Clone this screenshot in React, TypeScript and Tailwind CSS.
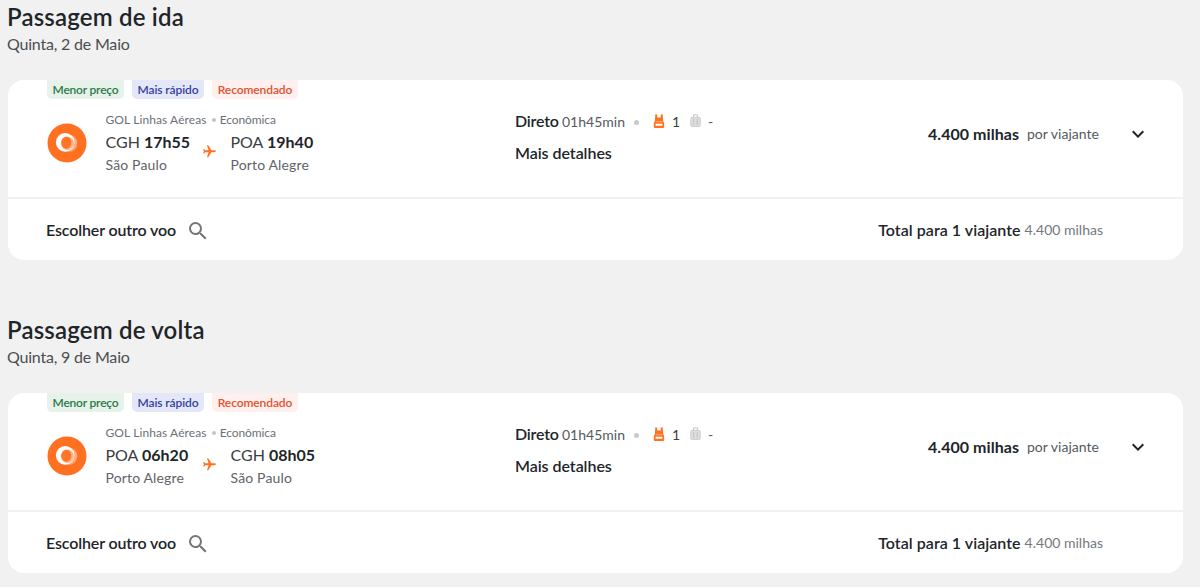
import { MdExpandMore, MdFlight, MdSearch } from "react-icons/md";

interface Stop {
  code: string;
  time: string;
  city: string;
}

interface FlightCardProps {
  title: string;
  date: string;
  from: Stop;
  to: Stop;
}

function GolLogo() {
  return (
    <svg width="40" height="40" viewBox="0 0 40 40" className="shrink-0">
      <circle cx="20" cy="20" r="19.5" fill="#ff7020" />
      <ellipse cx="21.8" cy="20.2" rx="8.4" ry="8.6" fill="#ffae80" />
      <circle cx="18.2" cy="19.4" r="9.3" fill="#fff" />
      <ellipse cx="20.4" cy="20.2" rx="6.6" ry="6.8" fill="#ffb68d" />
      <ellipse cx="19.4" cy="19.8" rx="5" ry="6" fill="#ff7426" />
    </svg>
  );
}

function BackpackIcon() {
  return (
    <svg width="12" height="15" viewBox="0 0 12 15">
      <path d="M3.2 5V.4M8.8 5V.4" stroke="#ff7020" strokeWidth="2" />
      <path d="M2.2 3.4h7.6l.4 3.8 1 1.8v3.8q0 1.2-1.2 1.2H2q-1.2 0-1.2-1.2V9l1-1.8z" fill="#ff7020" />
      <path d="M2.6 7.8h6.8" stroke="#ffc9a6" strokeWidth=".7" />
      <path d="M2.6 9.8h6.8v1.9H2.6z" fill="#fff" />
    </svg>
  );
}

function SuitcaseIcon() {
  return (
    <svg width="11" height="14" viewBox="0 0 11 14">
      <path d="M3.6 3.5V.9h3.8v2.6" fill="none" stroke="#c4c4c4" strokeWidth="1" />
      <rect x=".8" y="3.4" width="9.4" height="9" rx="1" fill="#dedede" stroke="#cbcbcb" />
      <path d="M3.8 5v6M7.2 5v6" stroke="#bdbdbd" strokeWidth=".9" />
    </svg>
  );
}

function StopInfo({ code, time, city }: Stop) {
  return (
    <div>
      <p className="h-[22px] text-[16px] leading-[22px] text-[#3c4043]">
        {code} <span className="font-bold text-[#212529]">{time}</span>
      </p>
      <p className="mt-[2px] h-5 text-[14px] leading-5 tracking-[0.15px] text-[#5f6368]">{city}</p>
    </div>
  );
}

function FlightCard({ title, date, from, to }: FlightCardProps) {
  return (
    <section className="h-[313px] pl-2 pr-[17px]">
      <h2 className="-ml-px h-[33px] text-[24px] font-semibold leading-[34px] tracking-[0.18px] text-[#212529]">{title}</h2>
      <p className="-ml-px h-5 text-[16px] leading-[22px] tracking-[-0.2px] text-[#4a4e52]">{date}</p>

      <article className="mt-[27px] h-[180px] overflow-hidden rounded-[16px] bg-white">
        <div className="flex h-[119px] border-b-2 border-[#f1f1f1] pl-[39px]">
          <div className="w-[468px]">
            <div className="flex gap-2 text-[12px] font-semibold leading-5 tracking-[-0.1px]">
              <span className="h-[19px] w-[77px] rounded-b-[5px] bg-[#e6f2ea] text-center tracking-[-0.2px] text-[#2b7a48]">
                Menor preço
              </span>
              <span className="h-[19px] w-[72px] rounded-b-[5px] bg-[#e4e7f8] text-center text-[#34409f]">Mais rápido</span>
              <span className="h-[19px] w-[86px] rounded-b-[5px] bg-[#fdf0ef] text-center text-[#e2512b]">Recomendado</span>
            </div>
            <div className="mt-3 flex">
              <div className="pt-3">
                <GolLogo />
              </div>
              <div className="ml-[18.5px]">
                <p className="flex h-[18px] items-center text-[12px] leading-[18px] text-[#6c7075]">
                  <span className="tracking-[0.1px]">GOL Linhas Aéreas</span>
                  <i className="ml-[5px] mr-1 size-1 rounded-full bg-[#c4c4c4]" />
                  <span className="tracking-[-0.1px]">Econômica</span>
                </p>
                <div className="mt-[2px] flex">
                  <div className="w-[96px]">
                    <StopInfo {...from} />
                  </div>
                  <MdFlight className="mr-[14px] mt-[13px] rotate-90 text-[#ff7020]" size={15} />
                  <StopInfo {...to} />
                </div>
              </div>
            </div>
          </div>

          <div className="w-[413px] pt-[29px] text-[#212529]">
            <div className="flex h-6 items-center text-[14px]">
              <span className="w-[47px] text-[16px] font-semibold tracking-[-0.2px]">Direto</span>
              <span className="w-[63px] text-[#55595e]">01h45min</span>
              <i className="ml-[9px] mr-[14px] mt-0.5 size-[5px] rounded-full bg-[#c8c8c8]" />
              <BackpackIcon />
              <span className="ml-[7px] w-[18px] text-[#3c4043]">1</span>
              <SuitcaseIcon />
              <span className="ml-[7px] text-[#55595e]">-</span>
            </div>
            <p className="mt-[8px] h-6 text-[16px] font-semibold leading-6 tracking-[-0.05px]">Mais detalhes</p>
          </div>

          <div className="flex h-[107px] items-center text-[#212529]">
            <span className="w-[99px] text-[16px] font-bold tracking-[0.05px]">4.400 milhas</span>
            <span className="w-[99px] text-[14px] text-[#55595e]">por viajante</span>
            <MdExpandMore size={24} className="mt-px text-[#212529]" />
          </div>
        </div>

        <div className="flex h-[61px] items-center pl-[38px] pr-[80px] text-[16px] font-semibold text-[#212529]">
          <span className="w-[140px] tracking-[-0.13px]">Escolher outro voo</span>
          <MdSearch size={24} className="mt-0.5 text-[#757575]" />
          <span className="ml-auto tracking-[0.04px]">Total para 1 viajante</span>
          <span className="ml-1 text-[14px] font-normal text-[#74787d]">4.400 milhas</span>
        </div>
      </article>
    </section>
  );
}

const cgh = { code: "CGH", city: "São Paulo" };
const poa = { code: "POA", city: "Porto Alegre" };

export default function App() {
  return (
    <main className="h-[587px] w-[1200px] overflow-hidden bg-[#f1f1f1] font-['Lato','Open_Sans',sans-serif]">
      <FlightCard
        title="Passagem de ida"
        date="Quinta, 2 de Maio"
        from={{ ...cgh, time: "17h55" }}
        to={{ ...poa, time: "19h40" }}
      />
      <FlightCard
        title="Passagem de volta"
        date="Quinta, 9 de Maio"
        from={{ ...poa, time: "06h20" }}
        to={{ ...cgh, time: "08h05" }}
      />
    </main>
  );
}
